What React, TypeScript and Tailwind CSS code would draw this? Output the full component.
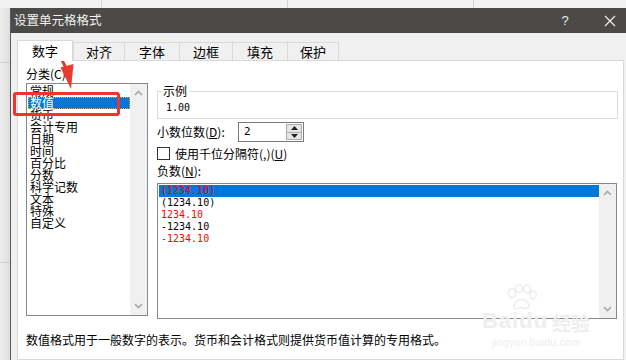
import type { ReactNode } from "react";

const categories = [
  "常规",
  "数值",
  "货币",
  "会计专用",
  "日期",
  "时间",
  "百分比",
  "分数",
  "科学记数",
  "文本",
  "特殊",
  "自定义",
];

const negatives = [
  { text: "(1234.10)", red: true },
  { text: "(1234.10)", red: false },
  { text: "1234.10", red: true },
  { text: "-1234.10", red: false },
  { text: "-1234.10", red: true },
];

const tabs = [
  { label: "对齐", w: "w-[52px] border-l" },
  { label: "字体", w: "w-[55px]" },
  { label: "边框", w: "w-[53px]" },
  { label: "填充", w: "w-[55px]" },
  { label: "保护", w: "w-[51px]" },
];

function Chevron({ up }: { up?: boolean }) {
  return (
    <svg width="9" height="6" viewBox="0 0 9 6" className="block">
      <path
        d={up ? "M1 5 L4.5 1.5 L8 5" : "M1 1 L4.5 4.5 L8 1"}
        fill="none"
        stroke="#a8a8a8"
        strokeWidth="1.6"
      />
    </svg>
  );
}

function Scrollbar() {
  return (
    <div className="flex w-[17px] flex-col items-center justify-between bg-[#f0f0f0] py-[6px]">
      <Chevron up />
      <Chevron />
    </div>
  );
}

function ListBox({ className, children }: { className: string; children: ReactNode }) {
  return <div className={`flex border border-[#828790] bg-white ${className}`}>{children}</div>;
}

function Spinner() {
  return (
    <div className="flex h-[20px] w-[66px] items-center border border-[#7a7a7a] bg-white pl-[5px] pr-[1px]">
      <span className="flex-1 font-['DejaVu_Sans_Mono',monospace] text-[11px]">2</span>
      <div className="flex h-[16px] w-[16px] flex-col border border-[#adadad] bg-[#e5e5e5]">
        <div className="flex flex-1 items-center justify-center border-b border-[#adadad]">
          <svg width="7" height="4" viewBox="0 0 7 4">
            <path d="M0 4 L3.5 0 L7 4 Z" fill="#222" />
          </svg>
        </div>
        <div className="flex flex-1 items-center justify-center">
          <svg width="7" height="4" viewBox="0 0 7 4">
            <path d="M0 0 L3.5 4 L7 0 Z" fill="#222" />
          </svg>
        </div>
      </div>
    </div>
  );
}

// faint baidu jingyan watermark, bottom right
function Watermark() {
  return (
    <div className="pointer-events-none absolute left-[476px] top-[284px] flex w-[120px] flex-col items-center text-[#eeeeee]">
      <svg width="34" height="26" viewBox="0 0 34 26" className="ml-[-30px]">
        <g fill="none" stroke="#ececec" strokeWidth="1.5">
          <ellipse cx="8" cy="9" rx="3.5" ry="4.5" />
          <ellipse cx="15" cy="4.5" rx="3.5" ry="4" />
          <ellipse cx="23" cy="5" rx="3.5" ry="4" />
          <ellipse cx="29" cy="11" rx="3.2" ry="4" />
          <path d="M10 22 C12 14 22 13 25 21 C26 25 19 25 17 23 C14 25 9 26 10 22 Z" />
        </g>
      </svg>
      <div className="flex items-end gap-[4px] leading-none">
        <span className="font-['Liberation_Sans',sans-serif] text-[22px] font-bold tracking-[1px]">Baidu</span>
        <span className="text-[19px] font-bold">经验</span>
      </div>
      <span className="mt-[5px] font-['Liberation_Sans',sans-serif] text-[11px] leading-none">jingyan.baidu.com</span>
    </div>
  );
}

function Annotations() {
  return (
    <>
      <div className="pointer-events-none absolute left-[13px] top-[92px] h-[24px] w-[107px] rounded-[3px] border-[3px] border-[#f2332b]" />
      <svg
        className="pointer-events-none absolute left-0 top-0"
        width="100"
        height="100"
        viewBox="0 0 100 100"
      >
        <path d="M55 49 L57.5 48.5 L67 66.5 L64 67.5 Z" fill="#ea3a2e" />
        <path d="M60.5 67.5 L73.5 64 L71 89 Z" fill="#ea3a2e" />
      </svg>
    </>
  );
}

function Dialog() {
  return (
    <div className="flex flex-1 flex-col border-l border-[#595959]">
      <div className="flex h-[25px] items-center bg-[#4b4a48] pl-[3px] pr-[6px] text-[#f2f2f2]">
        <span className="flex-1 text-[12.5px] leading-none">设置单元格格式</span>
        <span className="flex w-[20px] justify-center font-['Liberation_Sans',sans-serif] text-[13px] leading-none text-[#e8e8e8]">
          ?
        </span>
        <span className="ml-[25px] flex w-[20px] justify-center">
          <svg width="12" height="12" viewBox="0 0 12 12">
            <path d="M1 1 L11 11 M11 1 L1 11" stroke="#f0f0f0" strokeWidth="1.2" />
          </svg>
        </span>
      </div>

      <div className="flex flex-1 flex-col bg-[#f0f0f0] pl-[6px] pr-[2px] pt-[7px]">
        <div className="relative z-10 -mb-[1px] flex h-[21px] items-start">
          <div className="flex h-[21px] w-[56px] items-center justify-center border-x border-t border-[#d9d9d9] bg-white pb-[1px] text-[13px]">
            数字
          </div>
          {tabs.map((t) => (
            <div
              key={t.label}
              className={`mt-[2px] flex h-[18px] items-center justify-center border-r border-t border-[#d9d9d9] bg-[#f0f0f0] text-[13px] ${t.w}`}
            >
              {t.label}
            </div>
          ))}
        </div>

        <div className="flex flex-1 flex-col border border-[#d9d9d9] bg-white pl-[8px]">
          <div className="flex">
            <div className="flex w-[122px] flex-col pt-[5px]">
              <div className="mb-[1px] h-[16px] leading-[16px]">分类(C):</div>
              <ListBox className="h-[233px]">
                <div className="w-[103px] pl-[1px] pt-[1px]">
                  {categories.map((c, i) => (
                    <div
                      key={c}
                      className={
                        i === 1
                          ? "h-[12px] border border-dotted border-[#f6a13a] bg-[#0078d7] pl-[1px] text-[12px] leading-[10px] text-white"
                          : "h-[12px] pl-[2px] text-[12px] leading-[12px]"
                      }
                    >
                      {c}
                    </div>
                  ))}
                </div>
                <Scrollbar />
              </ListBox>
            </div>

            <div className="ml-[9px] flex w-[461px] flex-col pt-[23px]">
              <fieldset className="border border-[#dcdcdc]">
                <legend className="ml-[3px] px-[2px] text-[12px] leading-[14px]">示例</legend>
                <div className="h-[20px] pl-[8px] font-['DejaVu_Sans_Mono',monospace] text-[10px] leading-[20px]">
                  1.00
                </div>
              </fieldset>

              <div className="mt-[3px] flex h-[20px] items-center">
                <span className="w-[81px] text-[12px]">
                  小数位数(<span className="underline">D</span>):
                </span>
                <Spinner />
              </div>

              <div className="mt-[5px] flex h-[13px] items-center">
                <div className="h-[13px] w-[13px] border border-[#333]" />
                <span className="ml-[5px] text-[12px]">
                  使用千位分隔符(,)(<span className="underline">U</span>)
                </span>
              </div>

              <div className="mt-[3px] h-[16px] text-[12px] leading-[16px]">
                负数(<span className="underline">N</span>):
              </div>

              <ListBox className="mt-[4px] h-[136px] w-[460px]">
                <div className="flex-1 pl-[1px] pt-[1px]">
                  {negatives.map((n, i) => (
                    <div
                      key={i}
                      className={`h-[12px] pl-[2px] font-['DejaVu_Sans_Mono',monospace] text-[10px] leading-[12px] ${
                        i === 0 ? "bg-[#0078d7]" : ""
                      } ${n.red ? "text-[#ff0000]" : "text-black"}`}
                    >
                      {n.text}
                    </div>
                  ))}
                </div>
                <Scrollbar />
              </ListBox>
            </div>
          </div>

          <p className="mt-[13px] h-[16px] text-[12px] leading-[16px]">
            数值格式用于一般数字的表示。货币和会计格式则提供货币值计算的专用格式。
          </p>
        </div>
      </div>
    </div>
  );
}

export default function App() {
  return (
    <div className="relative flex h-[360px] w-[626px] flex-col overflow-hidden bg-[#ececec] font-['Noto_Sans_CJK_SC',sans-serif] text-[12px] text-black">
      <div className="flex h-[8px] bg-[#f2f2f2]">
        <div className="w-[102px] border-r border-[#d4d4d4]" />
        <div className="w-[186px] border-r border-[#d4d4d4]" />
        <div className="w-[186px] border-r border-[#d4d4d4]" />
        <div className="flex-1" />
      </div>
      <div className="flex flex-1">
        <div className="flex w-[10px] flex-col bg-gradient-to-r from-[#ededed] to-[#dedede]">
          <div className="h-[55px] border-b border-[#cfcfcf]" />
          <div className="h-[200px] border-b border-[#cfcfcf]" />
          <div className="flex-1" />
        </div>
        <Dialog />
      </div>
      <Watermark />
      <Annotations />
    </div>
  );
}
